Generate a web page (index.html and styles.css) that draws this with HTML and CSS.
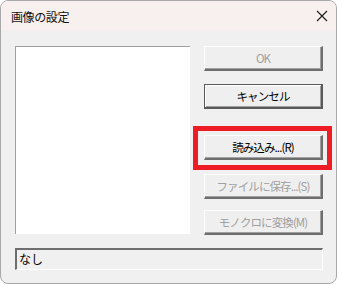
FILE: index.html
```html
<!DOCTYPE html>
<html lang="ja">
<head>
  <meta charset="UTF-8">
  <title>画像の設定</title>
  <link rel="stylesheet" href="styles.css">
</head>
<body>
  <div class="window">
    <div class="titlebar">
      <span class="title">画像の設定</span>
      <svg class="close" width="12" height="12" viewBox="0 0 12 12">
        <path d="M1 1 L11 11 M11 1 L1 11" stroke="#1a1a1a" stroke-width="1.1" fill="none"/>
      </svg>
    </div>
    <div class="content">
      <div class="main">
        <div class="listbox"></div>
        <div class="buttons">
          <button class="btn disabled">OK</button>
          <button class="btn default btn-cancel">キャンセル</button>
          <div class="highlight-wrap">
            <button class="btn">読み込み...(R)</button>
            <div class="highlight"></div>
          </div>
          <button class="btn disabled btn-save">ファイルに保存...(S)</button>
          <button class="btn disabled btn-mono">モノクロに変換(M)</button>
        </div>
      </div>
      <div class="status">なし</div>
    </div>
  </div>
</body>
</html>
```

FILE: styles.css
```css
body { margin: 0; background: #ffffff; font-family: "Noto Sans CJK JP", "Noto Sans", sans-serif; font-size: 12px; color: #000; }
.window { width: 337px; height: 284px; box-sizing: border-box; border: 1px solid #a8a8a8; border-radius: 8px; background: #f0f0f0; overflow: hidden; }
.titlebar { height: 30px; background: #f8f0ef; display: flex; align-items: center; justify-content: space-between; padding: 0 8px 0 10px; box-sizing: border-box; }
.title { font-size: 12px; color: #111; letter-spacing: -0.4px; }
.close { display: block; }
.content { padding: 15px 13px 0 14px; }
.main { display: flex; gap: 14px; }
.listbox { width: 175px; height: 188px; box-sizing: border-box; background: #fff; border-top: 1px solid #a0a0a0; border-left: 1px solid #a0a0a0; }
.buttons { display: flex; flex-direction: column; width: 119px; }
.btn { width: 119px; height: 25px; box-sizing: border-box; background: #efefef; font-family: inherit; font-size: 11.5px; letter-spacing: -0.9px; color: #000; padding: 0; border-style: solid; border-width: 1px 2px 2px 1px; border-color: #ffffff #6e6e6e #6e6e6e #ffffff; box-shadow: inset -1px -1px 0 #a0a0a0; }
.btn.disabled { color: #a0a0a0; }
.btn.default { border: 1px solid #5a5a5a; border-bottom-width: 2px; border-right-width: 2px; box-shadow: inset 1px 1px 0 #fff, inset -1px -1px 0 #a0a0a0; }
.btn-cancel { margin-top: 13px; }
.highlight-wrap { position: relative; margin-top: 26px; }
.highlight-wrap .btn { display: block; }
.highlight { position: absolute; left: -11px; right: -9px; top: -9px; bottom: -10px; border: 5px solid #ee1c25; }
.btn-save { margin-top: 14px; }
.btn-mono { margin-top: 11px; }
.status { margin-top: 13px; width: 308px; height: 22px; box-sizing: border-box; border-style: solid; border-width: 2px 1px 1px 2px; border-color: #6e6e6e #ffffff #ffffff #6e6e6e; padding: 0 0 0 2px; line-height: 18px; font-size: 12px; }
```
